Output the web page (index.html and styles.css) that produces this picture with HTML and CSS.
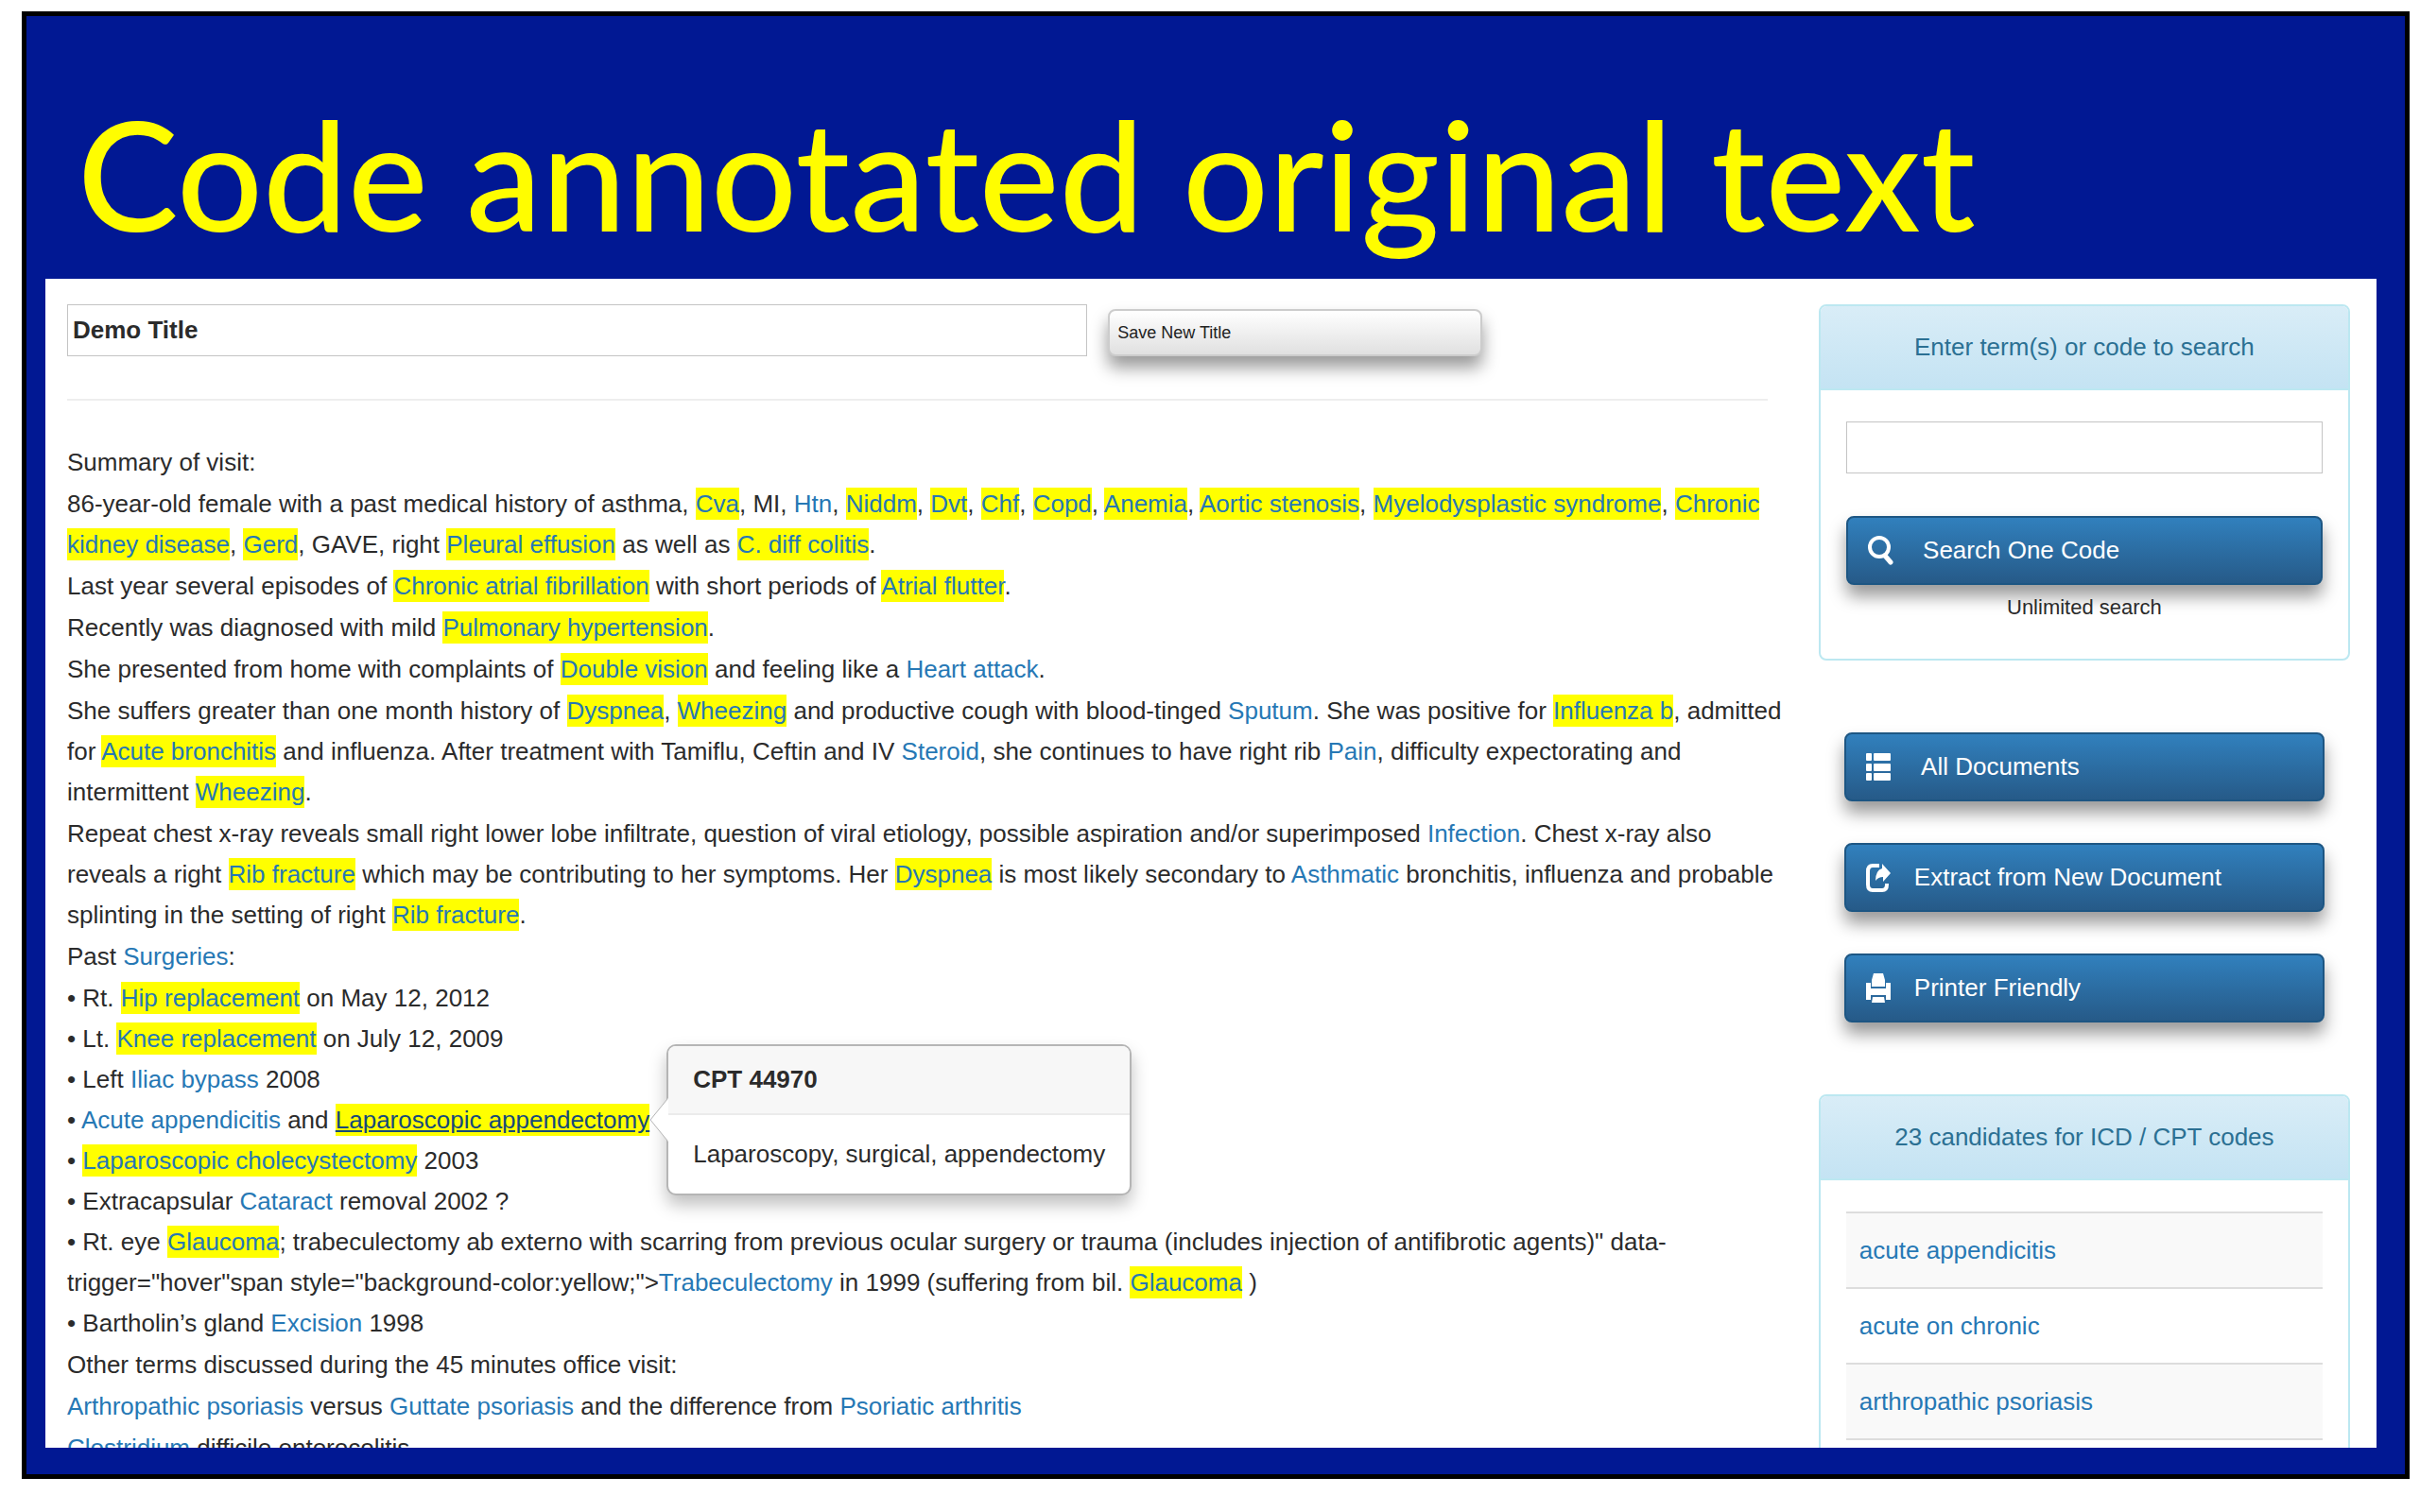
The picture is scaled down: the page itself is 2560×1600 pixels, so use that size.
FILE: index.html
```
<!DOCTYPE html>
<html lang="en">
<head>
    <meta charset="UTF-8">
    <title>Code annotated original text</title>
    <link rel="stylesheet" href="styles.css">
</head>
<body>
<div class="slide">
    <h1>Code annotated original text</h1>
    <div class="screen">
        <main class="main">
            <form class="title-form">
                <input type="text" class="field title-input" value="Demo Title" aria-label="Document title">
                <button type="button" class="btn btn-default">Save New Title</button>
            </form>
            <hr>
            <div class="note">
                <p>Summary of visit:</p>
                <p>86-year-old female with a past medical history of asthma, <a href="#" class="hl">Cva</a>, MI, <a href="#">Htn</a>, <a href="#" class="hl">Niddm</a>, <a href="#" class="hl">Dvt</a>, <a href="#" class="hl">Chf</a>, <a href="#" class="hl">Copd</a>, <a href="#" class="hl">Anemia</a>, <a href="#" class="hl">Aortic stenosis</a>, <a href="#" class="hl">Myelodysplastic syndrome</a>, <a href="#" class="hl">Chronic<br>kidney disease</a>, <a href="#" class="hl">Gerd</a>, GAVE, right <a href="#" class="hl">Pleural effusion</a> as well as <a href="#" class="hl">C. diff colitis</a>.</p>
                <p>Last year several episodes of <a href="#" class="hl">Chronic atrial fibrillation</a> with short periods of <a href="#" class="hl">Atrial flutter</a>.</p>
                <p>Recently was diagnosed with mild <a href="#" class="hl">Pulmonary hypertension</a>.</p>
                <p>She presented from home with complaints of <a href="#" class="hl">Double vision</a> and feeling like a <a href="#">Heart attack</a>.</p>
                <p>She suffers greater than one month history of <a href="#" class="hl">Dyspnea</a>, <a href="#" class="hl">Wheezing</a> and productive cough with blood-tinged <a href="#">Sputum</a>. She was positive for <a href="#" class="hl">Influenza b</a>, admitted<br>for <a href="#" class="hl">Acute bronchitis</a> and influenza. After treatment with Tamiflu, Ceftin and IV <a href="#">Steroid</a>, she continues to have right rib <a href="#">Pain</a>, difficulty expectorating and<br>intermittent <a href="#" class="hl">Wheezing</a>.</p>
                <p>Repeat chest x-ray reveals small right lower lobe infiltrate, question of viral etiology, possible aspiration and/or superimposed <a href="#">Infection</a>. Chest x-ray also<br>reveals a right <a href="#" class="hl">Rib fracture</a> which may be contributing to her symptoms. Her <a href="#" class="hl">Dyspnea</a> is most likely secondary to <a href="#">Asthmatic</a> bronchitis, influenza and probable<br>splinting in the setting of right <a href="#" class="hl">Rib fracture</a>.</p>
                <p>Past <a href="#">Surgeries</a>:</p>
                <ul>
                    <li>Rt. <a href="#" class="hl">Hip replacement</a> on May 12, 2012</li>
                    <li>Lt. <a href="#" class="hl">Knee replacement</a> on July 12, 2009</li>
                    <li>Left <a href="#">Iliac bypass</a> 2008</li>
                    <li><a href="#">Acute appendicitis</a> and <span class="anchor"><a href="#" class="hl active">Laparoscopic appendectomy</a><span class="popover" role="tooltip">
                        <span class="popover-title">CPT 44970</span>
                        <span class="popover-content">Laparoscopy, surgical, appendectomy</span>
                        <svg class="popover-arrow" viewBox="0 0 20 46"><path d="M20 0L1 23l19 23z" fill="#fff"/><path d="M19 1L1 23l18 22" fill="none" stroke="#b5b5b5"/></svg>
                    </span></span> .</li>
                    <li><a href="#" class="hl">Laparoscopic cholecystectomy</a> 2003</li>
                    <li>Extracapsular <a href="#">Cataract</a> removal 2002 ?</li>
                    <li>Rt. eye <a href="#" class="hl">Glaucoma</a>; trabeculectomy ab externo with scarring from previous ocular surgery or trauma (includes injection of antifibrotic agents)" data-<br>trigger="hover"span style="background-color:yellow;"&gt;<a href="#">Trabeculectomy</a> in 1999 (suffering from bil. <a href="#" class="hl">Glaucoma</a> )</li>
                    <li>Bartholin’s gland <a href="#">Excision</a> 1998</li>
                </ul>
                <p>Other terms discussed during the 45 minutes office visit:</p>
                <p><a href="#">Arthropathic psoriasis</a> versus <a href="#">Guttate psoriasis</a> and the difference from <a href="#">Psoriatic arthritis</a></p>
                <p><a href="#">Clostridium</a> difficile enterocolitis</p>
            </div>
        </main>
        <aside class="side">
            <section class="panel">
                <h2><label for="term">Enter term(s) or code to search</label></h2>
                <form class="panel-body">
                    <input type="text" class="field" id="term">
                    <button type="button" class="btn btn-primary">
                        <svg viewBox="0 0 28 32"><ellipse cx="13" cy="12" rx="10" ry="10" fill="none" stroke="#fff" stroke-width="4"/><path d="M19 21l6 7" stroke="#fff" stroke-width="5" stroke-linecap="round"/></svg>
                        &nbsp;Search One Code
                    </button>
                    <p class="hint">Unlimited search</p>
                </form>
            </section>
            <nav class="actions">
                <button type="button" class="btn btn-primary">
                    <svg viewBox="0 0 28 32" fill="#fff"><rect x="1" y="1" width="6" height="8" rx="1"/><rect x="9" y="1" width="18" height="8" rx="1"/><rect x="1" y="12" width="6" height="8" rx="1"/><rect x="9" y="12" width="18" height="8" rx="1"/><rect x="1" y="22" width="6" height="8" rx="1"/><rect x="9" y="22" width="18" height="8" rx="1"/></svg>
                    &nbsp;All Documents
                </button>
                <button type="button" class="btn btn-primary">
                    <svg viewBox="0 0 28 32"><path d="M15 3H8Q3 3 3 9v14q0 6 5 6h10q5 0 5-6v-1" fill="none" stroke="#fff" stroke-width="4"/><path d="M18 1l9 10-8 9v-5q-5 0-8 4 0-11 7-13z" fill="#fff"/></svg>
                    Extract from New Document
                </button>
                <button type="button" class="btn btn-primary">
                    <svg viewBox="0 0 28 32" fill="#fff"><path d="M9 0h10l2 7v7H7V7z"/><path d="M1 10h5v6h16v-6h5v18h-5v-5H6v5H1z"/><path d="M8 25h12l1 6H7z"/></svg>
                    Printer Friendly
                </button>
            </nav>
            <section class="panel">
                <h2>23 candidates for ICD / CPT codes</h2>
                <div class="panel-body">
                    <table>
                        <tr><td><a href="#">acute appendicitis</a></td></tr>
                        <tr><td><a href="#">acute on chronic</a></td></tr>
                        <tr><td><a href="#">arthropathic psoriasis</a></td></tr>
                    </table>
                </div>
            </section>
        </aside>
    </div>
</div>
</body>
</html>
```
FILE: styles.css
```
* {
    margin: 0;
    padding: 0;
    box-sizing: border-box;
}

body {
    height: 100vh;
    padding: 12px 11px 35px 23px;
    background-color: #fff;
    font: 26px/43px "Liberation Sans", Arial, sans-serif;
    color: #2b2b2b;
    overflow: hidden;
}

ul {
    list-style: none;
}

a {
    color: #2678b5;
    text-decoration: none;
}

.slide {
    height: 100%;
    display: flex;
    flex-direction: column;
    padding: 0 30px 28px 20px;
    border: 5px solid #000;
    background-color: #011893;
}

h1 {
    padding: 66px 0 12px 34px;
    font: 500 160px/200px Lato, sans-serif;
    color: #fffd00;
    white-space: nowrap;
}

.screen {
    flex: 1;
    min-height: 0;
    display: grid;
    grid-template-columns: minmax(0, 16fr) minmax(0, 5fr);
    gap: 54px;
    padding: 27px 28px 0 23px;
    background-color: #fff;
    overflow: hidden;
}

.field {
    width: 100%;
    height: 55px;
    padding: 0 5px;
    border: 1px solid #c4c4c4;
    background-color: #fff;
    font: inherit;
    color: inherit;
}

.title-form {
    display: grid;
    grid-template-columns: 60% 22%;
    align-items: end;
    gap: 22px;
}

.title-input {
    font-weight: bold;
}

hr {
    border: none;
    border-top: 2px solid #eee;
    margin: 45px 0 44px;
}

.btn {
    display: flex;
    align-items: center;
    width: 100%;
    height: 73px;
    gap: 24px;
    padding: 0 20px;
    border: 2px solid #1d5683;
    border-radius: 8px;
    box-shadow: 0 12px 18px rgba(0, 0, 0, .4);
    font: inherit;
    text-align: left;
}

.btn-primary {
    background-image: linear-gradient(#3180bd, #265a88);
    color: #fff;
}

.btn-default {
    height: 50px;
    padding: 0 8px;
    border-color: #ccc;
    background-image: linear-gradient(#fff, #e0e0e0);
    font-size: 18px;
    color: #222;
}

.btn svg {
    width: 28px;
    height: 32px;
}

.note {
    white-space: nowrap;
}

.note p,
.note ul {
    margin-bottom: 1px;
}

.note li::before {
    content: "• ";
}

.hl {
    padding: 2px 0;
    background-color: #ff0;
}

.active {
    color: #15497a;
    text-decoration: underline;
}

.anchor {
    position: relative;
}

.popover {
    position: absolute;
    left: 100%;
    top: 50%;
    transform: translateY(-50%);
    margin-left: 18px;
    border: 2px solid #b5b5b5;
    border-radius: 10px;
    background-color: #fff;
    box-shadow: 0 10px 18px rgba(0, 0, 0, .25);
}

.popover-title,
.popover-content {
    display: block;
    padding: 14px 26px;
}

.popover-title {
    border-bottom: 2px solid #ebebeb;
    border-radius: 8px 8px 0 0;
    background-color: #f7f7f7;
    font-weight: bold;
}

.popover-content {
    padding: 20px 26px;
}

.popover-arrow {
    position: absolute;
    left: -20px;
    top: 50%;
    margin-top: -23px;
    width: 20px;
    height: 46px;
}

.panel {
    border: 2px solid #bce8f1;
    border-radius: 8px;
}

.panel h2 {
    padding: 22px 0;
    border-bottom: 2px solid #bce8f1;
    border-radius: 6px 6px 0 0;
    background-image: linear-gradient(#d9edf7, #c4e3f3);
    font-size: 26px;
    font-weight: normal;
    text-align: center;
    color: #2b7093;
}

.panel-body {
    padding: 33px 27px;
}

.panel-body .btn {
    margin-top: 45px;
}

.hint {
    padding-top: 2px;
    font-size: 22px;
    text-align: center;
}

.actions {
    display: grid;
    gap: 44px;
    padding: 76px 27px;
}

table {
    width: 100%;
    border-collapse: collapse;
    border-bottom: 2px solid #ddd;
}

td {
    height: 80px;
    padding: 0 14px;
    border-top: 2px solid #ddd;
}

tr:nth-child(odd) td {
    background-color: #f9f9f9;
}
```
